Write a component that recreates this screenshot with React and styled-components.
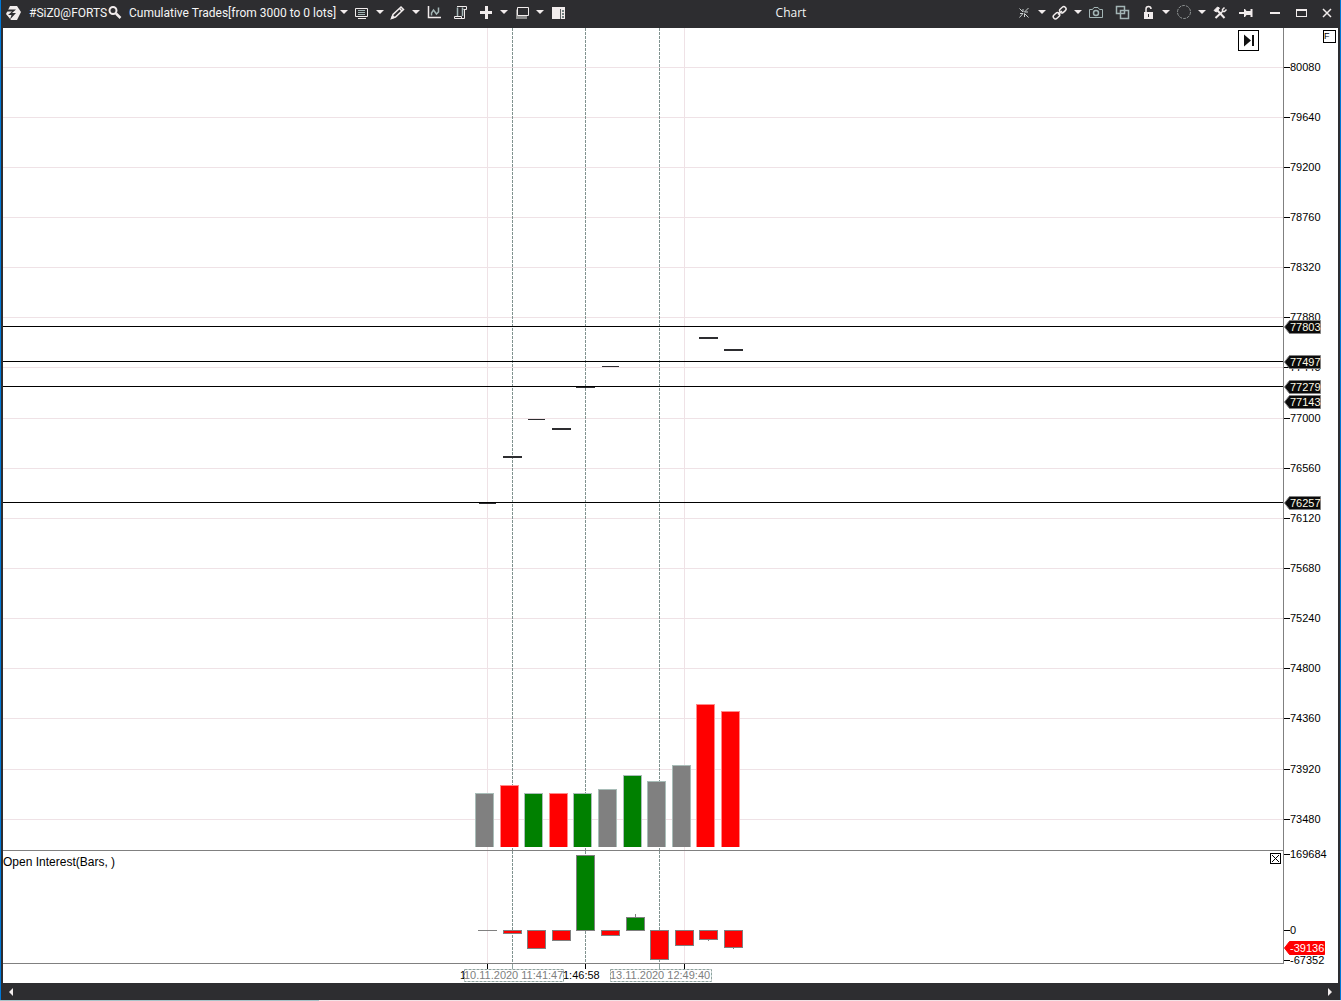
import styled, { createGlobalStyle } from "styled-components";

const GlobalStyle = createGlobalStyle`
	* {
		box-sizing: border-box;
	}

	body {
		margin: 0;
		background: #ffffff;
		font-family: "Liberation Sans", Arial, sans-serif;
	}
`;

const colors = {
	bar: "#2d2d30",
	accent: "#0078d7",
	icon: "#f1ecec",
	iconMuted: "#a3b5b5",
	grid: "#efe2e6",
	axis: "#808080",
	up: "#008000",
	down: "#ff0000",
	flat: "#808080",
};

const columns = [487, 512, 536, 561, 585, 610, 635, 659, 684, 708, 733];
const sessions = [487, 684];
const markers = [512, 585, 659];

const ticks = Array.from({ length: 16 }, (_, i) => 80080 - i * 440);
const levels = [77803, 77497, 77279, 76257];
const priceTags = [77803, 77497, 77279, 77143, 76257];

// x, y, width, height
const candles = [
	[479, 475, 17, 1],
	[503, 428, 19, 2],
	[528, 391, 17, 1],
	[552, 400, 19, 2],
	[576, 359, 19, 1],
	[602, 338, 17, 1],
	[699, 309, 19, 2],
	[724, 321, 19, 2],
];

const volumes = [
	["flat", 54],
	["down", 62],
	["up", 54],
	["down", 54],
	["up", 54],
	["flat", 58],
	["up", 72],
	["flat", 66],
	["flat", 82],
	["down", 143],
	["down", 136],
];

// color, top, height, wick top, wick height
const interest = [
	["flat", 79, 1],
	["down", 79, 4],
	["down", 79, 19],
	["down", 79, 11],
	["up", 4, 76],
	["down", 79, 6],
	["up", 66, 14, 63, 3],
	["down", 79, 30],
	["down", 79, 16],
	["down", 79, 10, 89, 1],
	["down", 79, 18, 97, 1],
];

const plotX = (x) => x - 3;
const priceY = (price) => Math.floor(39.15 + ((80080 - price) * 752) / 6600);

const Verticals = () => (
	<g shapeRendering="crispEdges">
		{sessions.map((x) => (
			<rect key={x} x={plotX(x)} y="0" width="1" height="100%" fill={colors.grid} />
		))}
		{markers.map((x) => (
			<line
				key={x}
				x1={plotX(x) + 0.5}
				x2={plotX(x) + 0.5}
				y1="0"
				y2="100%"
				stroke="#80928f"
				strokeDasharray="3 1"
			/>
		))}
	</g>
);

const AxisLabel = ({ y, children }) => (
	<g>
		<rect x="0" y={y} width="6" height="1" fill="#000" />
		<text x="6" y={y + 4} fill="#000">
			{children}
		</text>
	</g>
);

const AxisTag = ({ y, width, fill, stroke, color, children }) => (
	<g>
		<path
			d={`M0.5 ${y + 1} L5.5 ${y - 5.5} H${width + 0.5} V${y + 7.5} H5.5 Z`}
			fill={fill}
			stroke={stroke}
		/>
		<text x="6" y={y + 5} fill={color}>
			{children}
		</text>
	</g>
);

const PricePanel = () => (
	<Plot>
		<Canvas role="img" aria-label="Price and volume">
			<g shapeRendering="crispEdges">
				{ticks.map((price) => (
					<rect key={price} x="0" y={priceY(price)} width="100%" height="1" fill={colors.grid} />
				))}
			</g>
			<Verticals />
			<g shapeRendering="crispEdges">
				{levels.map((price) => (
					<rect key={price} x="0" y={priceY(price)} width="100%" height="1" fill="#000" />
				))}
				{candles.map(([x, y, width, height]) => (
					<rect key={x} x={plotX(x)} y={y} width={width} height={height} fill={colors.bar} />
				))}
			</g>
			<svg y="100%" overflow="visible">
				{volumes.map(([type, height], i) => (
					<g key={columns[i]}>
						<rect
							x={plotX(columns[i]) - 12}
							y={-3 - height}
							width="19"
							height={height}
							fill={type === "down" ? "#ff8a8a" : "#a9bdb8"}
						/>
						<rect
							x={plotX(columns[i]) - 11}
							y={-2 - height}
							width="17"
							height={height - 1}
							fill={colors[type]}
						/>
					</g>
				))}
			</svg>
		</Canvas>
		<JumpButton type="button" aria-label="Go to last bar">
			<svg width="13" height="13" viewBox="0 0 13 13">
				<path d="M2 0.500 L9 6.500 L2 12.500 Z M10 1h2v11h-2z" fill="#111" />
			</svg>
		</JumpButton>
	</Plot>
);

const PriceAxis = () => (
	<Axis>
		<Canvas role="img" aria-label="Price scale">
			{ticks.map((price) => (
				<AxisLabel key={price} y={priceY(price)}>
					{price}
				</AxisLabel>
			))}
			{priceTags.map((price) => (
				<AxisTag
					key={price}
					y={priceY(price)}
					width={36}
					fill="#0a0a0a"
					stroke="#808080"
					color="#fffbe8"
				>
					{price}
				</AxisTag>
			))}
		</Canvas>
		<FixedButton type="button" aria-label="Fixed scale">
			F
		</FixedButton>
	</Axis>
);

const InterestPanel = () => (
	<Plot>
		<Canvas role="img" aria-label="Open interest bars">
			<Verticals />
			<g shapeRendering="crispEdges">
				{interest.map(([type, y, height, wickY, wick], i) => (
					<g key={columns[i]}>
						{wick && (
							<rect x={plotX(columns[i])} y={wickY} width="1" height={wick} fill={colors.axis} />
						)}
						<rect x={plotX(columns[i]) - 9} y={y} width="19" height={height} fill={colors.axis} />
						{height > 2 && (
							<rect
								x={plotX(columns[i]) - 8}
								y={y + 1}
								width="17"
								height={height - 2}
								fill={colors[type]}
							/>
						)}
					</g>
				))}
			</g>
		</Canvas>
		<PanelTitle>Open Interest(Bars, )</PanelTitle>
		<CloseButton type="button" aria-label="Close panel">
			<svg width="9" height="9" viewBox="0 0 9 9">
				<path d="M1 1 L8 8 M8 1 L1 8" stroke="#000" />
			</svg>
		</CloseButton>
	</Plot>
);

const InterestAxis = () => (
	<Axis>
		<Canvas role="img" aria-label="Open interest scale">
			<AxisLabel y={3}>169684</AxisLabel>
			<AxisLabel y={79}>0</AxisLabel>
			<AxisLabel y={109}>-67352</AxisLabel>
			<AxisTag y={96} width={40} fill="#ff0000" stroke="#ff0000" color="#ffffff">
				-39136
			</AxisTag>
		</Canvas>
	</Axis>
);

const TimeAxis = () => (
	<TimeScale>
		<Canvas role="img" aria-label="Time scale">
			{[487, 585, 684].map((x) => (
				<rect key={x} x={plotX(x)} y="0" width="1" height="5" fill="#000" />
			))}
			{[512, 659].map((x) => (
				<rect key={x} x={plotX(x)} y="0" width="1" height="5" fill="#8fa39f" />
			))}
			<text x="457" y="15" fill="#000">
				1
			</text>
			<text x="560" y="15" fill="#000">
				1:46:58
			</text>
			{[
				[461, 99, "10.11.2020 11:41:47"],
				[607, 101, "13.11.2020 12:49:40"],
			].map(([x, width, label]) => (
				<g key={label}>
					<rect
						x={x + 0.5}
						y="5.5"
						width={width}
						height="12"
						fill="#fff"
						stroke="#8fa39f"
						strokeDasharray="3 1"
					/>
					<text x={x} y="15" fill="#808080">
						{label}
					</text>
				</g>
			))}
		</Canvas>
	</TimeScale>
);

const icons = {
	caret: <path d="M4 5h8l-4 4z" fill={colors.icon} />,
	search: (
		<g fill="none" stroke={colors.icon}>
			<circle cx="6" cy="5.500" r="3.500" strokeWidth="2" />
			<path d="M9 8.500l4.500 4.500" strokeWidth="2.500" />
		</g>
	),
	list: (
		<g fill="none" stroke={colors.icon}>
			<path d="M1.500 3.500h12v8h-12z" />
			<path d="M4 5.500h7M4 7.500h7M4 9.500h7" stroke={colors.iconMuted} />
			<path d="M4 13.500h8" />
		</g>
	),
	pencil: (
		<g fill="none" stroke={colors.icon} strokeWidth="1.500">
			<path d="M2 13l1-3.500 8-7.500 2.500 2.500-8 7.500z" />
			<path d="M9.500 3.500l2.500 2.500" />
			<path d="M1.500 13.500l1-2.500 1.500 1.500z" fill={colors.icon} />
		</g>
	),
	chart: (
		<g fill="none" stroke={colors.icon}>
			<path d="M2.500 1v11.500h12.500" strokeWidth="1.500" />
			<path d="M5.500 10.500V8l2-3 3 4 2-2V2.500" stroke={colors.iconMuted} strokeWidth="1.500" />
		</g>
	),
	scroll: (
		<g fill="none">
			<path d="M5.500 12V2.500M10.500 2.500V11" stroke={colors.iconMuted} strokeWidth="1.500" />
			<path d="M5 1.500h9.500v3h-3M12.500 4v9.500H2.500v-2h7v2" stroke={colors.icon} />
		</g>
	),
	plus: <path d="M7 1h3v5h4v3h-4v5h-3v-5h-5v-3h5z" fill={colors.icon} />,
	windows: (
		<g>
			<path d="M2 4.500h2v6h9v3.500h-11z" fill="#8b8b8b" />
			<path d="M3.500 2.500h11v8h-11z" fill={colors.bar} stroke={colors.icon} />
		</g>
	),
	panel: (
		<g>
			<path d="M2 2h13v12h-13z" fill={colors.icon} />
			<path d="M10 4h1v10h-1z" fill="#5b6262" />
			<path d="M12 5h2v2h-2zM12 8h2v2h-2zM12 11h2v2h-2z" fill="#71807f" />
		</g>
	),
	collapse: (
		<path
			d="M3.500 3.500l3.500 3.500V4M12.500 3l-4 4h3.500M3.500 12.500l3.500-4H4M12.500 12.500l-4-4v3.500"
			fill="none"
			stroke="#c9cfcf"
		/>
	),
	link: (
		<g fill="none" stroke={colors.icon} strokeWidth="1.500">
			<rect x="7.500" y="2.500" width="7" height="4.500" rx="2.200" transform="rotate(-42 11 5)" />
			<rect x="1" y="8.500" width="7" height="4.500" rx="2.200" transform="rotate(-42 4.500 10.800)" />
			<path d="M6 9.500l4-3.500" />
		</g>
	),
	camera: (
		<g fill="none" stroke={colors.iconMuted}>
			<path d="M1.500 4.500h3l1.500-2h4l1.500 2h3v8h-13z" />
			<circle cx="8" cy="8" r="2.500" strokeWidth="1.500" />
		</g>
	),
	copy: (
		<g fill="none" stroke={colors.iconMuted} strokeWidth="1.500">
			<path d="M2.500 1.500h8v7h-8z" />
			<path d="M6.500 5.500h8v8h-8z" fill={colors.bar} />
			<path d="M6.500 8.500h4v-3" />
		</g>
	),
	lock: (
		<g>
			<path d="M4 7h9v7h-9z" fill={colors.icon} />
			<path d="M6 7V4q0-2.500 2.500-2.500t2.500 2.500" fill="none" stroke={colors.icon} strokeWidth="1.500" />
			<path d="M8 9h1v3h-1z" fill={colors.bar} />
		</g>
	),
	circle: <circle cx="8" cy="7" r="6.500" fill="none" stroke="#8f9494" strokeDasharray="3 1" />,
	tools: (
		<g fill="none" stroke={colors.icon}>
			<path d="M2 5.500l3.500-3.500 2 1-3 4z" fill={colors.icon} />
			<path d="M5.500 5.500l7 7.500" strokeWidth="2" />
			<path d="M3.500 13l6.500-6" strokeWidth="2" />
			<path d="M12.500 2.500l-2 2v2h2l2-2" strokeWidth="1.500" />
		</g>
	),
	pin: (
		<path d="M1 7h5V4h1l1.500 2h4V4h2v8h-2v-2h-4L7 12H6V9H1z" fill={colors.icon} />
	),
	minimize: <path d="M3 7h10v2h-10z" fill={colors.icon} />,
	maximize: <path d="M3 4h11v8h-11zM4 6v5h9v-5z" fill={colors.icon} fillRule="evenodd" />,
	close: <path d="M4 4l8 8M12 4l-8 8" stroke={colors.icon} strokeWidth="1.500" />,
};

const Tool = ({ icon, label }) => (
	<ToolButton type="button" aria-label={label}>
		<svg width="16" height="16" viewBox="0 0 16 16">
			{icons[icon]}
		</svg>
	</ToolButton>
);

const Logo = () => (
	<svg width="18" height="16" viewBox="0 0 18 16" aria-hidden="true">
		<path d="M6 1h7l4 6-4 8H7L2 9z" fill={colors.icon} />
		<path d="M2 4.500h10L8 8h4L6 14.500 7.500 10H4l4-3.500H3z" fill={colors.bar} />
	</svg>
);

const Toolbar = () => (
	<Header>
		<Logo />
		<Symbol type="button">#SiZ0@FORTS</Symbol>
		<Tool icon="search" label="Find symbol" />
		<Template type="button">Cumulative Trades[from 3000 to 0 lots]</Template>
		<Tools>
			<Group>
				<Tool icon="caret" label="Choose template" />
				<Tool icon="list" label="Data" />
				<Tool icon="caret" label="Data options" />
				<Tool icon="pencil" label="Draw" />
				<Tool icon="caret" label="Draw options" />
				<Tool icon="chart" label="Indicators" />
			</Group>
			<Tool icon="scroll" label="Strategies" />
			<Group>
				<Tool icon="plus" label="Add" />
				<Tool icon="caret" label="Add options" />
				<Tool icon="windows" label="Windows" />
				<Tool icon="caret" label="Window options" />
				<Tool icon="panel" label="Trading panel" />
			</Group>
		</Tools>
		<Title>Chart</Title>
		<Tools>
			<Group>
				<Tool icon="collapse" label="Compress" />
				<Tool icon="caret" label="Compress options" />
				<Tool icon="link" label="Link" />
				<Tool icon="caret" label="Link options" />
				<Tool icon="camera" label="Snapshot" />
			</Group>
			<Tool icon="copy" label="Copy window" />
			<Group>
				<Tool icon="lock" label="Lock" />
				<Tool icon="caret" label="Lock options" />
				<Tool icon="circle" label="Color" />
				<Tool icon="caret" label="Color options" />
				<Tool icon="tools" label="Settings" />
			</Group>
			<Tool icon="pin" label="Pin" />
			<WindowControls>
				<Tool icon="minimize" label="Minimize" />
				<Tool icon="maximize" label="Maximize" />
				<Tool icon="close" label="Close" />
			</WindowControls>
		</Tools>
	</Header>
);

const App = () => (
	<Page>
		<GlobalStyle />
		<Window>
			<Toolbar />
			<Chart>
				<PricePanel />
				<PriceAxis />
				<InterestPanel />
				<InterestAxis />
				<TimeAxis />
			</Chart>
			<ScrollBar>
				<ScrollButton type="button" aria-label="Scroll left">
					<svg width="4" height="8" viewBox="0 0 4 8">
						<path d="M4 0v8L0 4z" fill={colors.icon} />
					</svg>
				</ScrollButton>
				<ScrollButton type="button" aria-label="Scroll right">
					<svg width="4" height="8" viewBox="0 0 4 8">
						<path d="M0 0v8l4-4z" fill={colors.icon} />
					</svg>
				</ScrollButton>
			</ScrollBar>
		</Window>
		<Edge />
	</Page>
);

const Page = styled.div`
	display: flex;
	flex-direction: column;
	min-height: 100vh;
`;

const Window = styled.main`
	flex: 1;
	display: flex;
	flex-direction: column;
	border: solid ${colors.accent};
	border-width: 0 1px;
	background: ${colors.bar};
`;

const Header = styled.header`
	display: flex;
	align-items: center;
	height: 28px;
	padding: 0 4px 2px 3px;
	color: #f5f5f5;
`;

const TextButton = styled.button`
	padding: 0;
	border: 0;
	background: none;
	color: inherit;
	font: 12px/16px Roboto, "Open Sans", sans-serif;
	white-space: nowrap;
	text-align: left;
`;

const Symbol = styled(TextButton)`
	width: 77px;
	margin-left: 7px;
`;

const Template = styled(TextButton)`
	width: 206px;
	margin-left: 5px;
`;

const ToolButton = styled.button`
	display: flex;
	align-items: center;
	justify-content: center;
	flex: none;
	width: 18px;
	height: 16px;
	padding: 0;
	border: 0;
	background: none;
`;

const Tools = styled.div`
	display: flex;
	gap: 8px;
`;

const Group = styled.div`
	display: flex;
`;

const WindowControls = styled(Group)`
	gap: 8px;
	margin-left: 3px;
`;

const Title = styled.h1`
	flex: 1;
	margin: 0;
	font: 12px/16px "Open Sans", "Noto Sans", sans-serif;
	text-align: center;
`;

const Chart = styled.section`
	flex: 1;
	display: grid;
	grid-template-columns: minmax(0, 1fr) 55px;
	grid-template-rows: minmax(400px, 1fr) 113px 19px;
	margin: 0 2px;
	background: #ffffff;
`;

const Canvas = styled.svg`
	position: absolute;
	inset: 0;
	width: 100%;
	height: 100%;
	overflow: visible;
	font-size: 11px;
`;

const Plot = styled.div`
	position: relative;
	border-bottom: 1px solid ${colors.axis};
`;

const Axis = styled.div`
	position: relative;
	border-left: 1px solid ${colors.axis};
`;

const TimeScale = styled.div`
	position: relative;
	grid-column: 1 / -1;
`;

const PanelTitle = styled.h2`
	position: relative;
	margin: 0;
	padding-top: 3px;
	font-size: 12px;
	line-height: 16px;
	font-weight: 400;
`;

const OverlayButton = styled.button`
	position: absolute;
	top: 2px;
	display: flex;
	align-items: center;
	justify-content: center;
	padding: 0;
	border: 1px solid #000000;
	background: #ffffff;
`;

const JumpButton = styled(OverlayButton)`
	right: 24px;
	width: 21px;
	height: 21px;
`;

const FixedButton = styled(OverlayButton)`
	right: 2px;
	width: 13px;
	height: 13px;
	align-items: flex-start;
	justify-content: flex-start;
	color: #000000;
	font: 9px/10px "Liberation Sans", Arial, sans-serif;
`;

const CloseButton = styled(OverlayButton)`
	right: 2px;
	width: 11px;
	height: 11px;
`;

const ScrollBar = styled.div`
	display: flex;
	align-items: center;
	justify-content: space-between;
	height: 17px;
	padding: 0 8px;
`;

const ScrollButton = styled.button`
	display: flex;
	padding: 0;
	border: 0;
	background: none;
`;

const Edge = styled.div`
	height: 1px;
	background: linear-gradient(to right, #a9c4c9 319px, #f3e2e6 319px);
`;

export default App;
